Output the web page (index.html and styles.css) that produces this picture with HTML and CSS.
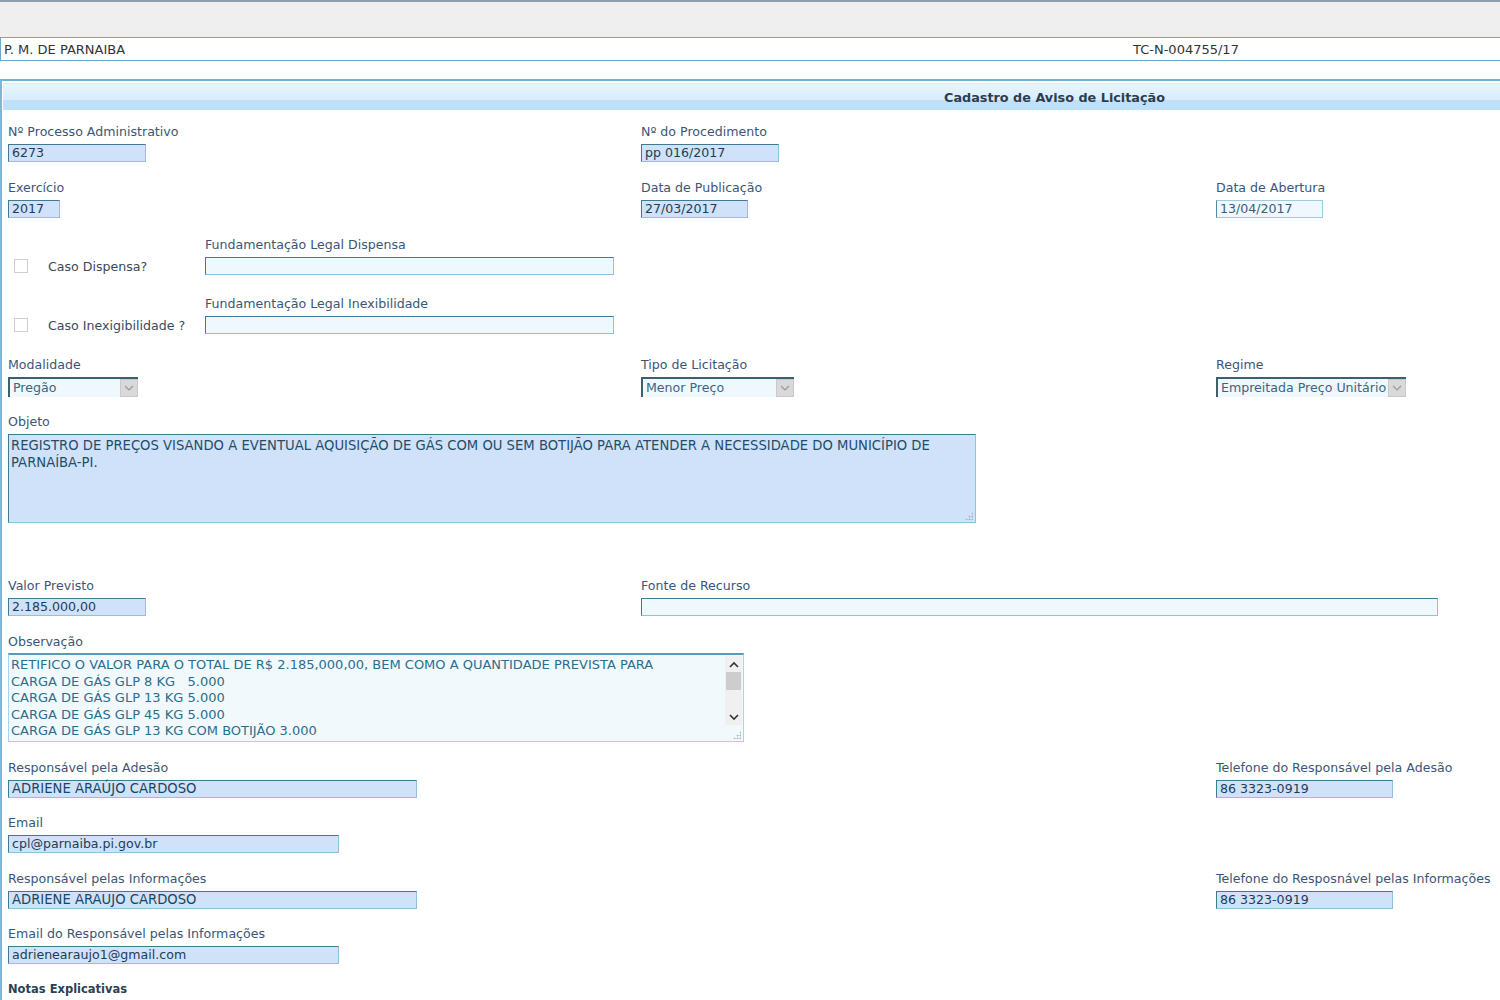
FILE: index.html
```html
<!DOCTYPE html>
<html lang="pt-BR">
<head>
<meta charset="utf-8">
<title>Cadastro de Aviso de Licitação</title>
<link rel="stylesheet" href="styles.css">
</head>
<body>
<div class="topstrip"></div>
<div class="entity-bar">
  <span class="entity-name">P. M. DE PARNAIBA</span>
  <span class="entity-code">TC-N-004755/17</span>
</div>
<div class="panel">
  <div class="panel-head"><span class="panel-title">Cadastro de Aviso de Licitação</span></div>

  <div class="row r1">
    <div class="field"><label>Nº Processo Administrativo</label><div class="inp w137">6273</div></div>
    <div class="field"><label>Nº do Procedimento</label><div class="inp w137">pp 016/2017</div></div>
    <div class="field"></div>
  </div>

  <div class="row r2">
    <div class="field"><label>Exercício</label><div class="inp w51">2017</div></div>
    <div class="field"><label>Data de Publicação</label><div class="inp w106">27/03/2017</div></div>
    <div class="field"><label>Data de Abertura</label><div class="inp light w106">13/04/2017</div></div>
  </div>

  <div class="crow r3">
    <div class="check"><span class="box"></span><span class="check-text">Caso Dispensa?</span></div>
    <div class="field"><label>Fundamentação Legal Dispensa</label><div class="inp blank w408"></div></div>
  </div>

  <div class="crow r4">
    <div class="check"><span class="box"></span><span class="check-text">Caso Inexigibilidade ?</span></div>
    <div class="field"><label>Fundamentação Legal Inexibilidade</label><div class="inp blank w408"></div></div>
  </div>

  <div class="row r5">
    <div class="field"><label>Modalidade</label><div class="sel w129"><span class="sel-text">Pregão</span><span class="sel-btn"><svg width="10" height="6" viewBox="0 0 10 6"><path d="M1 1l4 4 4-4" fill="none" stroke="#9a9a9a" stroke-width="1.2"/></svg></span></div></div>
    <div class="field"><label>Tipo de Licitação</label><div class="sel w152"><span class="sel-text">Menor Preço</span><span class="sel-btn"><svg width="10" height="6" viewBox="0 0 10 6"><path d="M1 1l4 4 4-4" fill="none" stroke="#9a9a9a" stroke-width="1.2"/></svg></span></div></div>
    <div class="field"><label>Regime</label><div class="sel w189"><span class="sel-text">Empreitada Preço Unitário</span><span class="sel-btn"><svg width="10" height="6" viewBox="0 0 10 6"><path d="M1 1l4 4 4-4" fill="none" stroke="#9a9a9a" stroke-width="1.2"/></svg></span></div></div>
  </div>

  <div class="block r6">
    <label>Objeto</label>
    <div class="area objeto">
      <div class="area-text">REGISTRO DE PREÇOS VISANDO A EVENTUAL AQUISIÇÃO DE GÁS COM OU SEM BOTIJÃO PARA ATENDER A NECESSIDADE DO MUNICÍPIO DE<br>PARNAÍBA-PI.</div>
      <span class="grip"></span>
    </div>
  </div>

  <div class="row r7">
    <div class="field"><label>Valor Previsto</label><div class="inp w137">2.185.000,00</div></div>
    <div class="field wide"><label>Fonte de Recurso</label><div class="inp blank w796"></div></div>
  </div>

  <div class="block r8">
    <label class="tight">Observação</label>
    <div class="area obs">
      <div class="area-text">RETIFICO O VALOR PARA O TOTAL DE R$ 2.185,000,00, BEM COMO A QUANTIDADE PREVISTA PARA<br>CARGA DE GÁS GLP 8 KG &nbsp;&nbsp;5.000<br>CARGA DE GÁS GLP 13 KG 5.000<br>CARGA DE GÁS GLP 45 KG 5.000<br>CARGA DE GÁS GLP 13 KG COM BOTIJÃO 3.000</div>
      <div class="scroll">
        <span class="sc-arrow"><svg width="10" height="7" viewBox="0 0 10 7"><path d="M1 6l4-4 4 4" fill="none" stroke="#333" stroke-width="1.6"/></svg></span>
        <span class="sc-thumb"></span>
        <span class="sc-track"></span>
        <span class="sc-arrow"><svg width="10" height="7" viewBox="0 0 10 7"><path d="M1 1l4 4 4-4" fill="none" stroke="#333" stroke-width="1.6"/></svg></span>
      </div>
      <span class="grip"></span>
    </div>
  </div>

  <div class="row r9">
    <div class="field"><label>Responsável pela Adesão</label><div class="inp up w408">ADRIENE ARAÚJO CARDOSO</div></div>
    <div class="field"></div>
    <div class="field"><label>Telefone do Responsável pela Adesão</label><div class="inp w176">86 3323-0919</div></div>
  </div>

  <div class="row r10">
    <div class="field"><label>Email</label><div class="inp w330">cpl@parnaiba.pi.gov.br</div></div>
  </div>

  <div class="row r11">
    <div class="field"><label>Responsável pelas Informações</label><div class="inp up w408">ADRIENE ARAUJO CARDOSO</div></div>
    <div class="field"></div>
    <div class="field"><label>Telefone do Resposnável pelas Informações</label><div class="inp w176">86 3323-0919</div></div>
  </div>

  <div class="row r12">
    <div class="field"><label>Email do Responsável pelas Informações</label><div class="inp w330">adrienearaujo1@gmail.com</div></div>
  </div>

  <div class="notes">Notas Explicativas</div>
</div>
</body>
</html>
```

FILE: styles.css
```css
* { box-sizing: border-box; }

html, body {
  margin: 0;
  padding: 0;
  background: #ffffff;
  font-family: "DejaVu Sans", Verdana, sans-serif;
  font-size: 12.6px;
  color: #3b5677;
  overflow: hidden;
}

.topstrip {
  height: 37px;
  background: #efefef;
  border-top: 2px solid #8f9db0;
}

.entity-bar {
  height: 24px;
  display: flex;
  align-items: center;
  padding-top: 1px;
  background: #fff;
  border-top: 1px solid #6aaac6;
  border-bottom: 1px solid #6aaac6;
  border-left: 1px solid #6aaac6;
  color: #333;
  font-size: 13px;
}
.entity-name { padding-left: 3px; width: 1132px; }

.panel {
  margin-top: 18px;
  border-top: 2px solid #6fb3d2;
  border-left: 2px solid #79b9d8;
  padding: 2px 0 20px 0;
  min-height: 940px;
}

.panel-head {
  margin-left: 1px;
  height: 27px;
  background: linear-gradient(#e8f5fe 0%, #d7edfd 60%, #bfe0fb 62%, #bde0fb 100%);
  border-top: 1px solid #d6ecfb;
  display: flex;
  align-items: center;
  padding-left: 941px;
}
.panel-title {
  font-weight: bold;
  font-size: 12.8px;
  color: #2d3d4f;
}

label {
  display: block;
  line-height: 16px;
  height: 16px;
  white-space: nowrap;
  margin-bottom: 4px;
}
label.tight { margin-bottom: 3px; }

.row {
  display: grid;
  grid-template-columns: 633px 575px 1fr;
  padding-left: 6px;
}

.crow {
  display: grid;
  grid-template-columns: 197px 1fr;
  padding-left: 6px;
}

.block { padding-left: 6px; }

.r1 { margin-top: 14px; }
.r2 { margin-top: 18px; }
.r3 { margin-top: 19px; }
.r4 { margin-top: 21px; }
.r5 { margin-top: 23px; }
.r6 { margin-top: 17px; }
.r7 { margin-top: 55px; }
.r8 { margin-top: 18px; }
.r9 { margin-top: 18px; }
.r10 { margin-top: 17px; }
.r11 { margin-top: 18px; }
.r12 { margin-top: 17px; }

.inp {
  height: 18px;
  line-height: 16px;
  background: #cfe2fa;
  border: 1px solid #8ec2e0;
  border-top-color: #3f7a95;
  border-left-color: #3f7a95;
  color: #1d3d55;
  padding-left: 3px;
  white-space: nowrap;
}
.inp.up { font-size: 13.2px; color: #1a4660; }
.inp.light, .inp.blank {
  background: #eff8fc;
}
.inp.light { border-color: #9fcbe2; border-left-color: #4d8aa5; border-top-color: #9fcbe2; color: #3d5d75; }

.w51 { width: 52px; }
.w106 { width: 107px; }
.w137 { width: 138px; }
.w176 { width: 177px; }
.w330 { width: 331px; }
.w408 { width: 409px; }
.w796 { width: 797px; }
.w129 { width: 130px; }
.w152 { width: 153px; }
.w189 { width: 190px; }

.check {
  display: flex;
  align-items: center;
  padding-top: 20px;
  height: 38px;
}
.box {
  width: 14px;
  height: 14px;
  border: 1px solid #cfcfcf;
  background: #fff;
  margin-left: 6px;
}
.check-text {
  margin-left: 20px;
  color: #3a4a5c;
}

.sel {
  height: 20px;
  display: flex;
  background: #eff8fd;
  border-top: 2px solid #3d5f6e;
  border-left: 2px solid #3d5f6e;
  color: #3d6583;
}
.sel-text {
  flex: 1;
  padding-left: 3px;
  line-height: 17px;
  white-space: nowrap;
  overflow: hidden;
}
.sel-btn {
  flex: none;
  width: 18px;
  background: #d9d9d9;
  border: 1px solid #c8c8c8;
  display: flex;
  align-items: center;
  justify-content: center;
}

.area {
  position: relative;
  display: flex;
  border: 1px solid #8ec2e0;
  border-top-color: #3f7a95;
  border-left-color: #3f7a95;
}
.area-text {
  flex: 1;
  padding: 2px 2px;
  white-space: nowrap;
  overflow: hidden;
}
.objeto {
  width: 968px;
  height: 89px;
  background: #cfe2fa;
  color: #1f4d6a;
  line-height: 17px;
  font-size: 13.2px;
}
.obs {
  width: 736px;
  height: 89px;
  background: #f1f9fd;
  color: #2a6e8f;
  line-height: 16.6px;
  font-size: 13px;
  border-color: #a6d4ea;
  border-top: 2px solid #5a9ab5;
}

.scroll {
  width: 17px;
  height: 69px;
  margin-top: 1px;
  margin-right: 1px;
  display: flex;
  flex-direction: column;
  background: #f0f0f0;
}
.sc-arrow {
  height: 16px;
  display: flex;
  align-items: center;
  justify-content: center;
}
.sc-thumb {
  height: 18px;
  margin: 0 1px;
  background: #cdcdcd;
}
.sc-track { flex: 1; }

.grip {
  position: absolute;
  right: 2px;
  bottom: 2px;
  width: 8px;
  height: 8px;
  background:
    radial-gradient(circle, #a9b4bc 0.8px, transparent 1.2px) 0 0 / 3px 3px;
  clip-path: polygon(100% 0, 100% 100%, 0 100%);
}

.notes {
  margin-top: 18px;
  padding-left: 6px;
  font-weight: bold;
  font-size: 11.5px;
  color: #2b3f55;
}
```
